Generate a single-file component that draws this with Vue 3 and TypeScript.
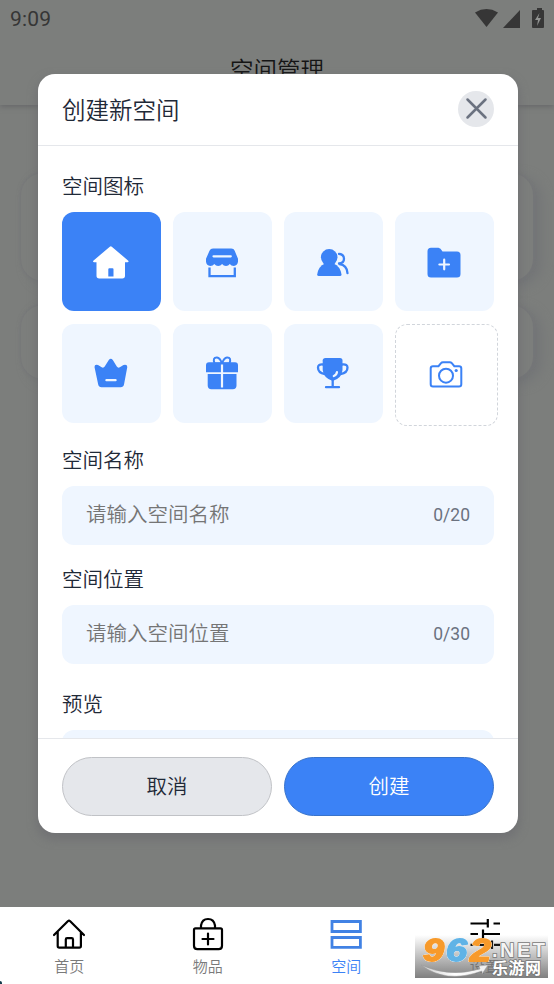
<script setup lang="ts">
import { ref } from 'vue'

type IconName = 'home' | 'store' | 'people' | 'folder' | 'crown' | 'gift' | 'trophy' | 'camera'

const icons: IconName[] = ['home', 'store', 'people', 'folder', 'crown', 'gift', 'trophy', 'camera']
const selected = ref<IconName>('home')
const spaceName = ref('')
const spacePlace = ref('')
</script>

<template>
  <div class="screen">
    <div class="page">
      <header class="top">
        <div class="status">
          <span class="clock">9:09</span>
          <svg class="status-icons" width="72" height="22" viewBox="0 0 72 22">
            <path d="M1 4.500Q12.500-2.300 24 4.500L12.500 19Z" />
            <path d="M46 2v18H29z" />
            <path d="M61 2h2V0h5v2h1q1 0 1 1v16q0 1-1 1H59q-1 0-1-1V3q0-1 1-1z" />
            <path class="bolt" d="M65.500 5l-4.500 7h3l-1 6 4-8h-3z" />
          </svg>
        </div>
        <h1 class="title">空间管理</h1>
      </header>
      <div class="backdrop-list">
        <div class="ghost ghost-a"></div>
        <div class="ghost ghost-b"></div>
      </div>
    </div>

    <section class="dialog">
      <header class="dialog-head">
        <h2>创建新空间</h2>
        <button class="close" aria-label="关闭">
          <svg width="35" height="35" viewBox="0 0 35 35"><path d="M8.500 8.500l18 18M26.500 8.500l-18 18" /></svg>
        </button>
      </header>

      <div class="dialog-body">
        <h3 class="label-icons">空间图标</h3>
        <div class="grid">
          <button
            v-for="name in icons"
            :key="name"
            class="tile"
            :class="{ active: selected === name, upload: name === 'camera' }"
            @click="selected = name"
          >
            <svg class="glyph" width="36" height="36" viewBox="0 0 36 36">
              <path v-if="name === 'home'" class="fill" fill-rule="evenodd" d="M16.800 2.700q1-.9 2 0L35 16.500q1.400 1.600-.6 1.800H32v13.500q0 2.700-2.700 2.700H6.200q-2.700 0-2.700-2.700V18.300H1.200q-2-.2-.6-1.800zM15.300 25.200v7.300h5.200v-7.300q0-1-1-1h-3.200q-1 0-1 1z" />
              <g v-else-if="name === 'store'">
                <path class="fill" d="M9 4.500h18.300q2.500 0 3.400 2.300L34 14.800v3q-.6 4-4.200 4.200-2.600 0-4-2-1.400 2-3.800 2t-3.900-2q-1.500 2-3.900 2t-3.900-2q-1.400 2-4 2Q2.500 21.800 2 17.800v-3L5.500 6.800Q6.500 4.500 9 4.500z" />
                <path class="cut" d="M9.500 12.300h17.300" />
                <path class="line flat" d="M5.500 23.500v8.700h25.300v-8.700" />
              </g>
              <g v-else-if="name === 'people'">
                <circle class="fill" cx="14.200" cy="13.300" r="8.300" />
                <path class="fill" d="M10 19.500h8.500q7 3 8 11 0 1.500-1.500 1.500H3.700q-1.500 0-1.500-1.500 1-8 7.800-11z" />
                <path class="line" d="M24 9.800q5 .5 5 5 0 4.500-5 4.700M24.500 20.200q7.500 1 8 9" />
              </g>
              <g v-else-if="name === 'folder'">
                <path class="fill" d="M5 3.800h7.500q2 .2 4 3.600H31q3.500 0 3.500 3.500V30q0 3.500-3.500 3.500H5q-3.500 0-3.500-3.500V7.300Q1.500 3.800 5 3.800z" />
                <path class="cut" d="M18.200 15.700v9.600M13.400 20.500H23" />
              </g>
              <g v-else-if="name === 'crown'">
                <path class="fill" d="M15.800 5q2-2.500 4 0l4 6.500q1.200 1.800 3 .8l3.700-2.300q3.800-1 3.800 2L31 29.500q-.6 2.800-3.300 2.800H8.500q-2.700 0-3.300-2.800L1.500 12q0-3 3.500-2l3.700 2.300q1.800 1 3-.8z" />
                <path class="cut" d="M13.400 25.200h9.200" />
              </g>
              <g v-else-if="name === 'gift'">
                <path class="line thin" d="M18 8.500H10.500Q8.300 2.300 13 2.500q3 .2 5 6 2-5.800 5-6 4.700-.2 2.500 6z" />
                <path class="fill" d="M5 7.300h26q3 0 3 3v6.900H2v-6.900q0-3 3-3zM3.700 19h28.800v11.500q0 3.700-3.700 3.700H7.400q-3.700 0-3.700-3.700z" />
                <path class="cut flat" d="M18 9.500V32.500" />
              </g>
              <g v-else-if="name === 'trophy'">
                <path class="line" d="M8 9.500Q3 9 3 12.500 3 18 10 19M27.500 9.500q5-.5 5 3 0 5.500-7 6.500M17.700 25v7M11 32.200h13" />
                <path class="fill" d="M10.500 3H25q2.500 0 2.500 2.500V15q-.5 8-9.800 11Q8.500 23 7.700 15V5.500Q7.700 3 10.500 3z" />
                <path class="cut" d="M22 17q-.5 3-3.200 4" />
              </g>
              <g v-else>
                <path class="line thin" d="M5 9.200h5.500l2.500-3Q13.700 5.300 15 5.300h6.800q1.200 0 2 .9l2.500 3H31q2.300 0 2.300 2.300v15.800q0 2.300-2.300 2.300H5q-2.300 0-2.300-2.300V11.500Q2.700 9.200 5 9.200z" />
                <circle class="line thin" cx="18" cy="18.700" r="7" />
                <circle class="fill" cx="28.200" cy="13.500" r="1.600" />
              </g>
            </svg>
          </button>
        </div>

        <h3 class="label-name">空间名称</h3>
        <label class="field">
          <input v-model="spaceName" maxlength="20" placeholder="请输入空间名称" />
          <span>{{ spaceName.length }}/20</span>
        </label>

        <h3 class="label-place">空间位置</h3>
        <label class="field">
          <input v-model="spacePlace" maxlength="30" placeholder="请输入空间位置" />
          <span>{{ spacePlace.length }}/30</span>
        </label>

        <h3 class="label-preview">预览</h3>
        <div class="preview"></div>
      </div>

      <footer class="dialog-foot">
        <button class="pill cancel">取消</button>
        <button class="pill create">创建</button>
      </footer>
    </section>

    <nav class="tabs">
      <a class="tab">
        <svg width="36" height="36" viewBox="0 0 36 36">
          <path d="M3 18L16.800 4.200q1.200-1.100 2.400 0L33 18M6.700 15v14q0 1.600 1.600 1.600h20q1.600 0 1.600-1.600V15M14.800 30.500v-8q0-1.300 1.300-1.300h4.600q1.300 0 1.300 1.300v8" />
        </svg>
        <span>首页</span>
      </a>
      <a class="tab">
        <svg width="36" height="36" viewBox="0 0 36 36">
          <path d="M5.500 11.300h25q1.500 0 1.500 1.500v16q0 3.400-3.400 3.400H7.400Q4 32.200 4 28.800v-16q0-1.500 1.500-1.500zM11 11V8.500q1-6.500 7-6.500t7 6.500V11M18 16.500v11M12.500 22h11" />
        </svg>
        <span>物品</span>
      </a>
      <a class="tab current">
        <svg width="36" height="36" viewBox="0 0 36 36">
          <path d="M4 4.500h28.400v10H4zM4 20.500h28.400v9.800H4z" />
        </svg>
        <span>空间</span>
      </a>
      <a class="tab">
        <svg width="36" height="36" viewBox="0 0 36 36">
          <path class="flat" d="M3.500 6.500h16.800M20.800 2v8.500M26.500 6.500H33M3.500 17H11M16 12.500v8.500M16 17h17M3.500 27.800H21M25 23.500v8.500M27 27.800h6" />
        </svg>
        <span>设置</span>
      </a>
    </nav>

    <aside class="mark">
      <svg width="133" height="43" viewBox="0 0 133 43">
        <defs>
          <linearGradient id="swoosh" x1="0" x2="1">
            <stop offset="0" stop-color="#ccc" />
            <stop offset=".5" stop-color="#fff" />
            <stop offset="1" stop-color="#eee" />
          </linearGradient>
        </defs>
        <g class="digits">
          <text class="orange" x="8" y="26" textLength="21" lengthAdjust="spacingAndGlyphs">9</text>
          <text class="blue" x="31" y="26" textLength="21" lengthAdjust="spacingAndGlyphs">6</text>
          <text class="orange" x="55" y="26" textLength="21" lengthAdjust="spacingAndGlyphs">2</text>
        </g>
        <path d="M6 30Q34 43 65 34l-1-3 9-1-6 9v-3Q31 49 6 30z" fill="url(#swoosh)" stroke="#999" stroke-width=".5" />
        <text class="net" x="77" y="22" textLength="53">.NET</text>
        <text class="cn" x="77" y="39" textLength="49">乐游网</text>
      </svg>
    </aside>
    <i class="corner"></i>
  </div>
</template>

<style>
body {
  margin: 0;
  overflow: hidden;
}
</style>

<style scoped>
.screen {
  position: relative;
  width: 554px;
  height: 984px;
  overflow: hidden;
  display: flex;
  flex-direction: column;
  background: #7c7e7c;
  font-family: Roboto, "Noto Sans CJK SC", sans-serif;
  font-weight: 350;
  color: #1f2937;
}
.screen * {
  box-sizing: border-box;
}
h1, h2, h3 {
  margin: 0;
  font-weight: 350;
}
button {
  padding: 0;
  border: 0;
  font: inherit;
}
.page {
  flex: 1;
  min-height: 0;
}
.top {
  position: relative;
  height: 105px;
  background: #7c7e7c;
  box-shadow: 0 2px 5px #68696b;
}
.status {
  display: flex;
  justify-content: space-between;
  padding: 8px 8px 0 10px;
  height: 38px;
}
.clock {
  font-size: 21px;
  line-height: 23px;
  font-weight: 400;
  color: #363636;
  letter-spacing: .2px;
}
.status-icons {
  fill: #363636;
}
.status-icons .bolt {
  fill: #929492;
}
.title {
  padding-top: 16px;
  text-align: center;
  font-size: 23.500px;
  line-height: 34px;
  color: #151515;
}
.backdrop-list {
  padding: 68px 21px;
  display: grid;
  gap: 24px;
}
.ghost {
  border-radius: 22px;
  background: #7c7e7c;
  box-shadow: 0 0 3px 1px #767779, 8px 4px 12px #737577;
}
.ghost-a { height: 108px; }
.ghost-b { height: 74px; }

.dialog {
  position: absolute;
  left: 38px;
  top: 74px;
  width: 480px;
  height: 759px;
  display: flex;
  flex-direction: column;
  border-radius: 17px;
  overflow: hidden;
  background: #fff;
  box-shadow: 0 5px 8px 2px rgba(105, 106, 112, .55);
}
.dialog-head {
  height: 72px;
  flex: none;
  display: flex;
  align-items: center;
  justify-content: space-between;
  padding: 0 24px;
  border-bottom: 1.500px solid #e5e7eb;
}
.dialog-head h2 {
  font-size: 23.500px;
  line-height: 34px;
  padding-top: 3px;
}
.close {
  width: 36px;
  height: 36px;
  margin-bottom: 2px;
  border-radius: 50%;
  background: #e5e7eb;
  display: grid;
  place-items: center;
}
.close path {
  stroke: #6b7280;
  stroke-width: 2.500;
  stroke-linecap: round;
}
.dialog-body {
  flex: 1;
  min-height: 0;
  overflow: hidden;
  padding: 26px 24px 0;
}
h3 {
  font-size: 20.500px;
  line-height: 30px;
}
.grid {
  display: grid;
  grid-template-columns: repeat(4, 99px);
  grid-auto-rows: 99px;
  gap: 12.500px 12px;
  margin-top: 10px;
}
.tile {
  width: 99px;
  height: 99px;
  border-radius: 12px;
  background: #eff6ff;
  color: #3b82f6;
  --paper: #eff6ff;
  display: grid;
  place-items: center;
}
.glyph {
  position: relative;
  left: -.5px;
}
.tile.active {
  background: #3b82f6;
  color: #fff;
}
.tile.upload {
  width: 102.500px;
  height: 102px;
  background: #fff;
  border: 1.500px dashed #d1d5db;
}
.fill { fill: currentColor; }
.line {
  fill: none;
  stroke: currentColor;
  stroke-width: 2.300;
  stroke-linecap: round;
}
.thin { stroke-width: 2; }
.cut {
  fill: none;
  stroke: var(--paper);
  stroke-width: 2.200;
  stroke-linecap: round;
}
.flat { stroke-linecap: butt; }
.label-name { margin-top: 22px; }
.field {
  display: flex;
  align-items: center;
  height: 59px;
  margin-top: 10px;
  padding: 0 24px;
  border-radius: 12px;
  background: #eff6ff;
}
.field input {
  flex: 1;
  min-width: 0;
  padding: 0;
  border: 0;
  outline: 0;
  background: transparent;
  font: inherit;
  font-size: 20.500px;
  line-height: 30px;
}
.field input::placeholder {
  color: #757575;
  opacity: 1;
}
.field span {
  font-size: 17.500px;
  font-weight: 400;
  color: #6b7280;
}
.label-name { margin-top: 23px; }
.label-place { margin-top: 20px; }
.label-preview { margin-top: 26px; }
.preview {
  height: 100px;
  margin-top: 10px;
  border-radius: 12px;
  background: #eff6ff;
}
.dialog-foot {
  flex: none;
  height: 95px;
  display: flex;
  gap: 12px;
  padding: 18px 24px 17px;
  border-top: 1.500px solid #e5e7eb;
}
.pill {
  flex: 1;
  height: 59px;
  padding-bottom: 3px;
  border-radius: 30px;
  font-size: 20.500px;
}
.cancel {
  background: #e5e7eb;
  color: #1f2937;
  border: 1px solid #c0c2c6;
}
.create {
  background: #3b82f6;
  color: #fff;
  border: 1px solid #3873cb;
}
.tabs {
  height: 77px;
  display: grid;
  grid-template-columns: repeat(4, 1fr);
  background: #fff;
}
.tab {
  display: flex;
  flex-direction: column;
  align-items: center;
  padding-top: 10px;
  color: #7a7a7a;
  font-size: 15px;
  line-height: 22px;
}
.tab svg {
  fill: none;
  stroke: #000;
  stroke-width: 2.200;
  stroke-linecap: round;
  stroke-linejoin: round;
}
.tab .flat { stroke-linecap: butt; }
.tab span { margin-top: 3px; }
.tab.current { color: #3b82f6; }
.tab.current svg {
  stroke: #4182e4;
  stroke-width: 2.800;
  stroke-linejoin: miter;
}
.mark {
  position: absolute;
  left: 415px;
  top: 935px;
  width: 133px;
  height: 43px;
  background: linear-gradient(rgba(255, 255, 255, 0), rgba(110, 110, 110, .88));
}
.mark svg { display: block; }
.digits {
  font: italic 700 32px "Liberation Sans", sans-serif;
  stroke-width: 1.800;
  stroke-linejoin: round;
  filter: drop-shadow(0 0 .6px #fff) drop-shadow(0 0 .6px #fff);
}
.orange {
  fill: #f79a2b;
  stroke: #f79a2b;
}
.blue {
  fill: #60b3e6;
  stroke: #60b3e6;
}
.net {
  font: 700 20px "Liberation Sans", sans-serif;
  fill: #f4f4f4;
  stroke: #777;
  stroke-width: 1.600;
  paint-order: stroke;
}
.cn {
  font: 700 16px "Noto Sans CJK SC", sans-serif;
  fill: #fff;
  stroke: #777;
  stroke-width: 1.600;
  paint-order: stroke;
}
.corner {
  position: absolute;
  left: 0;
  bottom: 0;
  width: 2px;
  height: 3px;
  background: #123a4a;
  border-top-right-radius: 2px;
}
</style>
